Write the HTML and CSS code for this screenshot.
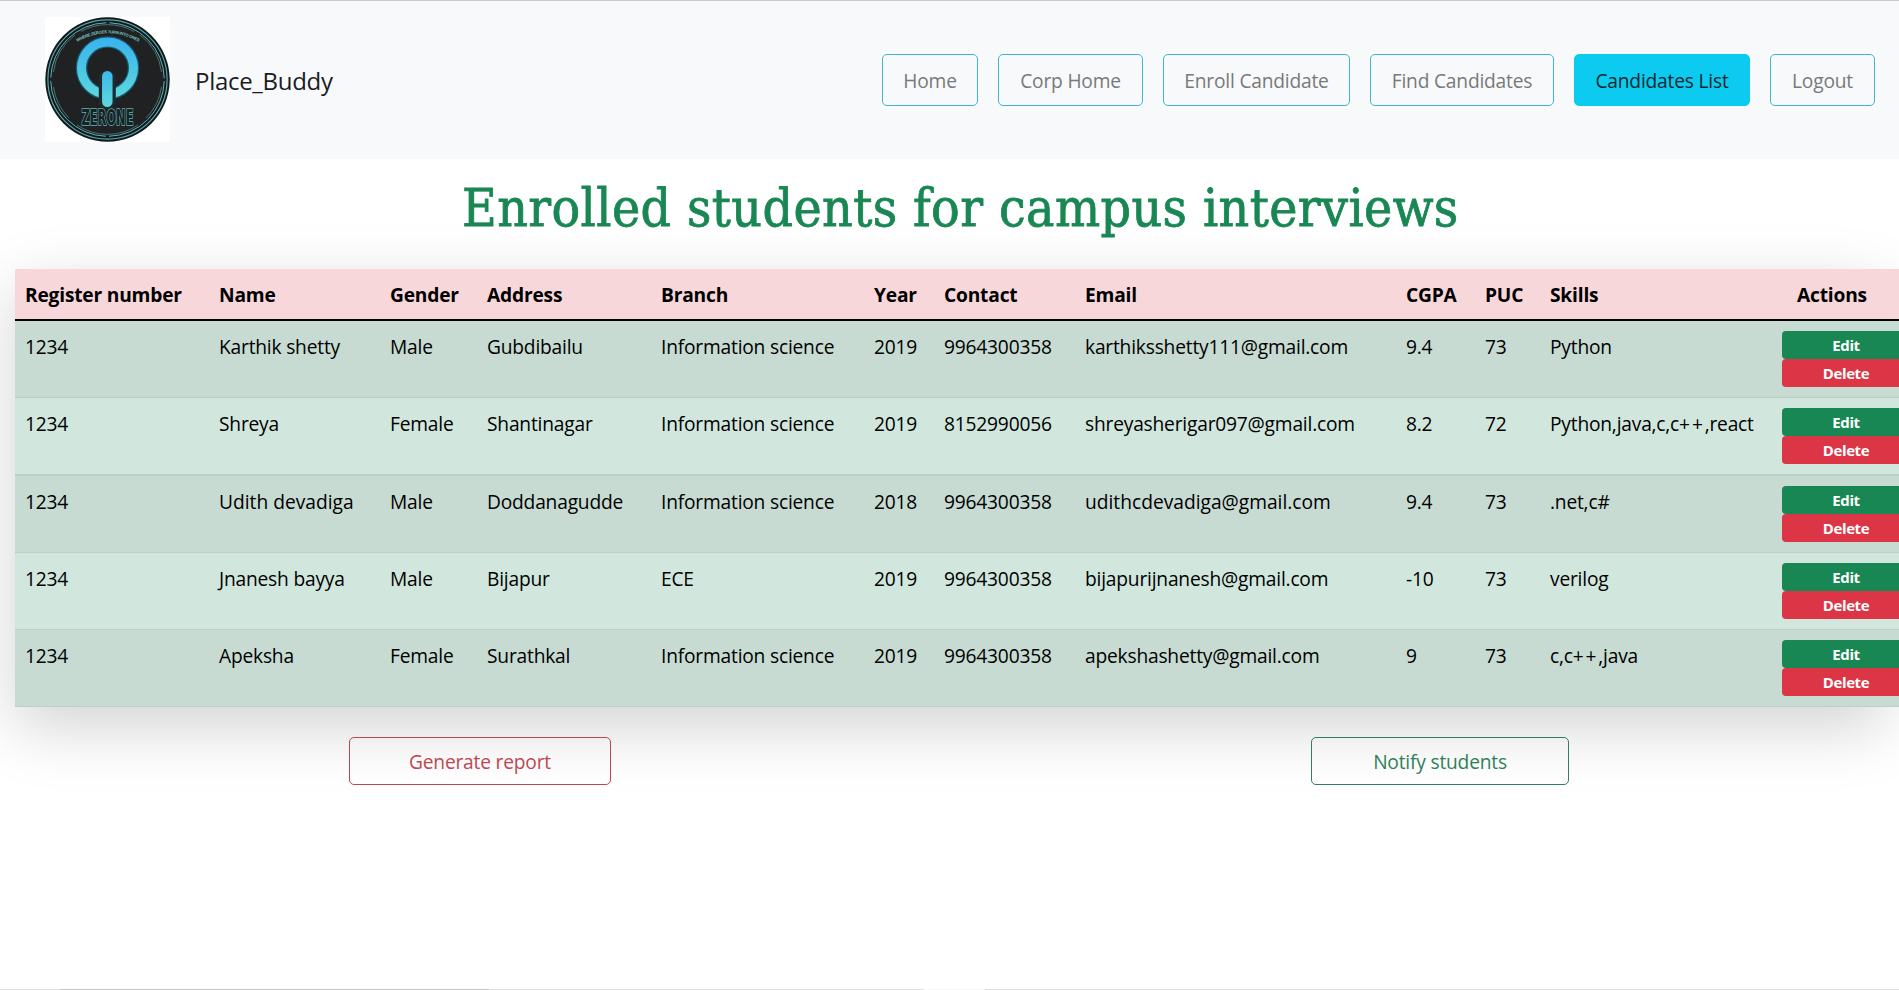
FILE: index.html
```html
<!DOCTYPE html>
<html lang="en">
<head>
<meta charset="utf-8">
<title>Place_Buddy</title>
<link rel="stylesheet" href="styles.css">
</head>
<body>
<header class="navbar">
  <svg class="logo" viewBox="0 0 125 125" role="img" aria-label="Zerone">
    <defs>
      <linearGradient id="glow" gradientUnits="userSpaceOnUse" x1="0" y1="20" x2="0" y2="82">
        <stop offset="0" stop-color="#38b2ee"/>
        <stop offset="1" stop-color="#5fd8dc"/>
      </linearGradient>
      <linearGradient id="stem" gradientUnits="userSpaceOnUse" x1="0" y1="54" x2="0" y2="90">
        <stop offset="0" stop-color="#3db9ea"/>
        <stop offset="1" stop-color="#5fd8dc"/>
      </linearGradient>
      <path id="motto" d="M31 25.500 Q62.500 7 95 25.500"/>
    </defs>
    <rect width="125" height="125" fill="#fff"/>
    <circle cx="62.5" cy="62.5" r="62.2" fill="#10191c"/>
    <circle cx="62.5" cy="62.5" r="59.6" fill="none" stroke="#5aa5a8" stroke-width="1.2"/>
    <circle cx="62.5" cy="62.5" r="56.8" fill="#202122" stroke="#62b0b2" stroke-width="1" stroke-dasharray="86 3.2" stroke-dashoffset="-1.6"/>
    <path d="M30 18 A54.5 54.5 0 0 0 8.5 55M95 18 A54.5 54.5 0 0 1 116.500 55M8.500 70 A54.500 54.500 0 0 0 24 101M116.500 70 A54.500 54.500 0 0 1 101 101M32 108 A54.500 54.500 0 0 0 93 108M36 14.500 A54.500 54.500 0 0 1 89 14.500" fill="none" stroke="#4c8688" stroke-width=".8"/>
    <circle cx="62.500" cy="51" r="26" fill="none" stroke="#175b73" stroke-width="11.500"/>
    <circle cx="62.500" cy="51" r="26" fill="none" stroke="url(#glow)" stroke-width="9"/>
    <path d="M62.300 61V84" stroke="#1b2b31" stroke-width="17" stroke-linecap="round"/>
    <path d="M62.300 59.300V84.700" stroke="url(#stem)" stroke-width="10.500" stroke-linecap="round"/>
    <text class="motto"><textPath href="#motto" startOffset="50%">WHERE ZEROES TURN INTO ONES</textPath></text>
    <text class="mark" x="36.500" y="107.500" textLength="52" lengthAdjust="spacingAndGlyphs">ZERONE</text>
  </svg>
  <span class="brand">Place_Buddy</span>
  <nav class="menu">
    <a class="link home">Home</a>
    <a class="link corp">Corp Home</a>
    <a class="link enroll">Enroll Candidate</a>
    <a class="link find">Find Candidates</a>
    <a class="link list active">Candidates List</a>
    <a class="link logout">Logout</a>
  </nav>
</header>
<main>
  <h1 class="title">Enrolled students for campus interviews</h1>
  <div class="panel">
    <table class="students">
      <colgroup>
        <col class="c-reg"><col class="c-name"><col class="c-gender"><col class="c-address"><col class="c-branch"><col class="c-year"><col class="c-contact"><col class="c-email"><col class="c-cgpa"><col class="c-puc"><col class="c-skills"><col class="c-actions">
      </colgroup>
      <thead>
        <tr><th>Register number</th><th>Name</th><th>Gender</th><th>Address</th><th>Branch</th><th>Year</th><th>Contact</th><th>Email</th><th>CGPA</th><th>PUC</th><th>Skills</th><th class="act-head">Actions</th></tr>
      </thead>
      <tbody>
        <tr><td>1234</td><td>Karthik shetty</td><td>Male</td><td>Gubdibailu</td><td>Information science</td><td>2019</td><td>9964300358</td><td>karthiksshetty111@gmail.com</td><td>9.4</td><td>73</td><td>Python</td><td><div class="acts"><button class="edit">Edit</button><button class="delete">Delete</button></div></td></tr>
        <tr class="tall"><td>1234</td><td>Shreya</td><td>Female</td><td>Shantinagar</td><td>Information science</td><td>2019</td><td>8152990056</td><td>shreyasherigar097@gmail.com</td><td>8.2</td><td>72</td><td>Python,java,c,c<span class="plus">++</span>,react</td><td><div class="acts"><button class="edit">Edit</button><button class="delete">Delete</button></div></td></tr>
        <tr><td>1234</td><td class="wide">Udith devadiga</td><td>Male</td><td>Doddanagudde</td><td>Information science</td><td>2018</td><td>9964300358</td><td class="wide">udithcdevadiga@gmail.com</td><td>9.4</td><td>73</td><td>.net,c#</td><td><div class="acts"><button class="edit">Edit</button><button class="delete">Delete</button></div></td></tr>
        <tr><td>1234</td><td>Jnanesh bayya</td><td>Male</td><td>Bijapur</td><td>ECE</td><td>2019</td><td>9964300358</td><td>bijapurijnanesh@gmail.com</td><td>-10</td><td>73</td><td>verilog</td><td><div class="acts"><button class="edit">Edit</button><button class="delete">Delete</button></div></td></tr>
        <tr><td>1234</td><td>Apeksha</td><td>Female</td><td>Surathkal</td><td>Information science</td><td>2019</td><td>9964300358</td><td>apekshashetty@gmail.com</td><td>9</td><td>73</td><td>c,c<span class="plus">++</span>,java</td><td><div class="acts"><button class="edit">Edit</button><button class="delete">Delete</button></div></td></tr>
      </tbody>
    </table>
  </div>
  <div class="footer-actions">
    <button class="outline report">Generate report</button>
    <button class="outline notify">Notify students</button>
  </div>
</main>
<div class="frame-edge"><span class="thumb"></span><span class="gap"></span></div>
</body>
</html>
```

FILE: styles.css
```css
* { box-sizing: border-box; }
body {
  margin: 0;
  height: 990px;
  overflow: hidden;
  display: flex;
  flex-direction: column;
  background: #fff;
  color: #000;
  font: 400 19.2px/30px "Open Sans", "Noto Sans", sans-serif;
  letter-spacing: -0.2px;
}
.navbar {
  height: 159px;
  flex: none;
  display: flex;
  align-items: center;
  padding: 0 24px 0 45px;
  background: #f8f9fa;
  border-top: 1px solid #c8cacd;
}
.logo { width: 125px; height: 125px; display: block; margin-bottom: 1px; }
.motto { font: 700 4.2px "Liberation Sans", sans-serif; fill: #7cc4c6; letter-spacing: -0.25px; text-anchor: middle; }
.mark { font: 700 22px "DejaVu Sans Condensed", "DejaVu Sans", sans-serif; fill: #172226; stroke: #64b1b3; stroke-width: 1.6; paint-order: stroke; letter-spacing: 0; }
.brand { margin: 2px 0 0 25px; font-size: 24px; color: #1b1c1e; letter-spacing: -0.3px; }
.menu { margin-left: auto; display: flex; gap: 20px; }
.link {
  height: 52px;
  border: 1px solid #3fb6cf;
  border-radius: 5px;
  line-height: 52px;
  text-align: center;
  color: #77797b;
}
.home { width: 96px; }
.corp { width: 145px; }
.enroll { width: 187px; }
.find { width: 184px; }
.list { width: 176px; }
.logout { width: 105px; }
.active { background: #0dcaf0; border-color: #0dcaf0; color: #10272d; }
.title {
  margin: 0;
  height: 110px;
  padding: 17px 0 0 462px;
  font: 400 53px/64px "DejaVu Serif Condensed", "DejaVu Serif", serif;
  font-stretch: condensed;
  letter-spacing: 0.4px;
  -webkit-text-stroke: 0.8px #198754;
  color: #198754;
  white-space: nowrap;
}
.panel {
  width: 1869px;
  margin-left: 15px;
  box-shadow: 0 20px 60px rgba(0, 0, 0, .175);
}
.students {
  width: 1905px;
  table-layout: fixed;
  border-collapse: separate;
  border-spacing: 0;
  text-align: left;
}
.c-reg { width: 194px; }
.c-name { width: 171px; }
.c-gender { width: 97px; }
.c-address { width: 174px; }
.c-branch { width: 213px; }
.c-year { width: 70px; }
.c-contact { width: 141px; }
.c-email { width: 321px; }
.c-cgpa { width: 79px; }
.c-puc { width: 65px; }
.c-skills { width: 232px; }
.c-actions { width: 148px; }
th {
  height: 52px;
  padding: 2px 0 0 10px;
  background: #f8d7da;
  border-bottom: 2px solid #000;
  font-weight: 700;
  white-space: nowrap;
}
.act-head { padding-left: 25px; }
td {
  height: 77px;
  padding: 11px 0 0 10px;
  vertical-align: top;
  background: #d1e7dd;
  border-bottom: 1px solid #bcd0c7;
  white-space: nowrap;
}
tbody tr:nth-child(odd) td { background: #c7dbd2; }
.tall td { height: 78px; border-bottom-width: 2px; }
.wide { letter-spacing: 0; }
.plus { letter-spacing: 1.8px; }
.acts {
  width: 128px;
  margin-top: -1px;
  display: flex;
  flex-direction: column;
}
.acts button {
  height: 28px;
  padding: 1px 0 0;
  border: 0;
  border-radius: 4px;
  color: #fff;
  font: 700 15px/27px "Open Sans", "Noto Sans", sans-serif;
  letter-spacing: -0.4px;
}
.edit { background: #198754; }
.delete { background: #dc3545; }
.footer-actions { display: flex; padding: 30px 0 0 349px; gap: 700px; }
.outline {
  height: 48px;
  border: 1px solid;
  border-radius: 5px;
  background: transparent;
  font: inherit;
  letter-spacing: -0.2px;
  padding: 2px 0 0;
}
.report { width: 262px; color: #bd4753; border-color: #bd4753; }
.notify { width: 258px; color: #2f8059; border-color: #2f8059; }
.frame-edge { margin-top: auto; height: 1px; flex: none; display: flex; background: #e0e0e0; padding-left: 60px; }
.thumb { width: 429px; height: 1px; background: #c8c8c8; }
.gap { width: 61px; height: 1px; margin-left: 435px; background: #f8f8f8; }
```
